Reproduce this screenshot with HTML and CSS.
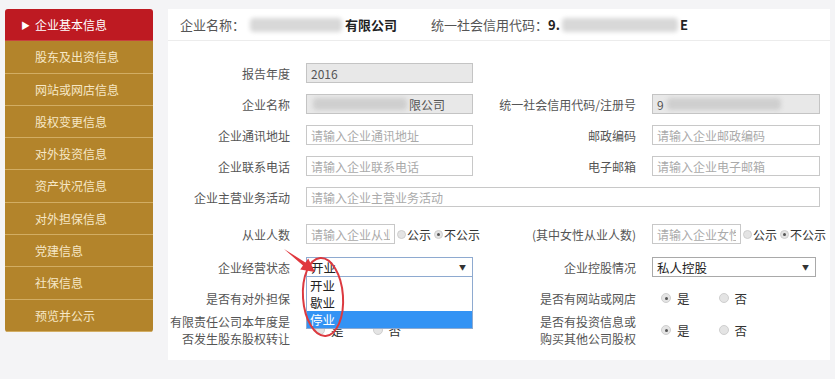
FILE: index.html
```html
<!DOCTYPE html>
<html lang="zh-CN">
<head>
    <meta charset="UTF-8">
    <meta name="viewport" content="width=device-width, initial-scale=1.0">
    <title>企业年度报告</title>
    <link rel="stylesheet" href="styles.css">
</head>
<body>
<div class="page">
    <aside class="sidebar">
        <ul class="menu">
            <li class="menu-item active"><span class="tri">&#9654;</span>企业基本信息</li>
            <li class="menu-item">股东及出资信息</li>
            <li class="menu-item">网站或网店信息</li>
            <li class="menu-item">股权变更信息</li>
            <li class="menu-item">对外投资信息</li>
            <li class="menu-item">资产状况信息</li>
            <li class="menu-item">对外担保信息</li>
            <li class="menu-item">党建信息</li>
            <li class="menu-item">社保信息</li>
            <li class="menu-item">预览并公示</li>
        </ul>
    </aside>

    <main class="main">
        <div class="head">
            <span>企业名称：</span>
            <span class="smudge smudge-name"></span>
            <b class="strong">有限公司</b>
            <span class="head-code">统一社会信用代码：</span>
            <b class="strong">9.</b>
            <span class="smudge smudge-code"></span>
            <b class="strong">E</b>
        </div>

        <form class="info-form">
            <div class="row">
                <label class="lbl">报告年度</label>
                <div class="box box-readonly">2016</div>
            </div>

            <div class="row">
                <label class="lbl">企业名称</label>
                <div class="box box-readonly"><span class="smudge smudge-in"></span>限公司</div>
                <label class="lbl">统一社会信用代码/注册号</label>
                <div class="box box-readonly">9<span class="smudge smudge-in2"></span></div>
            </div>

            <div class="row">
                <label class="lbl">企业通讯地址</label>
                <input class="box" type="text" placeholder="请输入企业通讯地址">
                <label class="lbl">邮政编码</label>
                <input class="box" type="text" placeholder="请输入企业邮政编码">
            </div>

            <div class="row">
                <label class="lbl">企业联系电话</label>
                <input class="box" type="text" placeholder="请输入企业联系电话">
                <label class="lbl">电子邮箱</label>
                <input class="box" type="text" placeholder="请输入企业电子邮箱">
            </div>

            <div class="row">
                <label class="lbl">企业主营业务活动</label>
                <input class="box span3" type="text" placeholder="请输入企业主营业务活动">
            </div>

            <div class="row row-staff">
                <label class="lbl">从业人数</label>
                <div class="inline">
                    <input class="box box-short" type="text" placeholder="请输入企业从业人数">
                    <span class="radio"></span>公示
                    <span class="radio checked gap"></span>不公示
                </div>
                <label class="lbl">(其中女性从业人数)</label>
                <div class="inline">
                    <input class="box box-short" type="text" placeholder="请输入企业女性从业人数">
                    <span class="radio"></span>公示
                    <span class="radio checked gap"></span>不公示
                </div>
            </div>

            <div class="row row-state">
                <label class="lbl">企业经营状态</label>
                <div class="select-wrap">
                    <div class="select select-open">开业<span class="caret">&#9660;</span></div>
                    <ul class="options">
                        <li>开业</li>
                        <li>歇业</li>
                        <li class="hover">停业</li>
                    </ul>
                </div>
                <label class="lbl">企业控股情况</label>
                <div class="select select-narrow">私人控股<span class="caret">&#9660;</span></div>
            </div>

            <div class="row row-radio">
                <label class="lbl">是否有对外担保</label>
                <div class="choice">
                    <span class="radio"></span><span class="opt">是</span>
                    <span class="radio checked"></span><span class="opt">否</span>
                </div>
                <label class="lbl">是否有网站或网店</label>
                <div class="choice">
                    <span class="radio checked"></span><span class="opt">是</span>
                    <span class="radio"></span><span class="opt">否</span>
                </div>
            </div>

            <div class="row row-last">
                <label class="lbl">有限责任公司本年度是<br>否发生股东股权转让</label>
                <div class="choice">
                    <span class="radio"></span><span class="opt">是</span>
                    <span class="radio"></span><span class="opt">否</span>
                </div>
                <label class="lbl">是否有投资信息或<br>购买其他公司股权</label>
                <div class="choice">
                    <span class="radio checked"></span><span class="opt">是</span>
                    <span class="radio"></span><span class="opt">否</span>
                </div>
            </div>
        </form>
    </main>

    <!-- red annotation drawn over the dropdown -->
    <svg class="mark" width="835" height="379" viewBox="0 0 835 379">
        <ellipse cx="323" cy="297" rx="20" ry="39" transform="rotate(-4 323 297)" fill="none" stroke="#dc3a40" stroke-width="2"/>
        <polygon points="284,249 305.4,262.4 308.2,258.4 315,272 300.2,269.6 303,265.6" fill="#e0383e"/>
    </svg>
</div>
</body>
</html>
```

FILE: styles.css
```css
body {
    margin: 0;
    background-color: #f4f4f6;
    font-family: "Noto Sans CJK SC", "Noto Sans", sans-serif;
    font-size: 12px;
    color: #555;
}
.page {
    display: flex;
    position: relative;
    padding-top: 9px;
    height: 370px;
    box-sizing: border-box;
}
.sidebar {
    width: 148px;
    margin-left: 5px;
}
.menu {
    list-style: none;
    margin: 0;
    padding: 0;
    border-radius: 3px;
    overflow: hidden;
}
.menu-item {
    height: 31.3px;
    line-height: 31px;
    padding-left: 30px;
    background-color: #b3842b;
    color: #f6e7c6;
    border-bottom: 1px solid #d2ad63;
    font-size: 12px;
}
.menu-item.active {
    background-color: #be1a22;
    color: #fff;
    padding-left: 16px;
    border-bottom-color: #c9423f;
}
.tri {
    font-size: 9px;
    margin-right: 5px;
    position: relative;
    top: -1px;
}
.main {
    margin-left: 15px;
    width: 662px;
    height: 351px;
    background: #fff;
}
.head {
    display: flex;
    align-items: center;
    height: 31px;
    padding-left: 12px;
    border-bottom: 1px solid #ececec;
    font-size: 13px;
    color: #555;
}
.strong {
    color: #222;
    font-weight: bold;
}
.head-code {
    margin-left: 34px;
}
.smudge {
    display: inline-block;
    height: 14px;
    background: #d8d8d8;
    filter: blur(2px);
    border-radius: 4px;
}
.smudge-name {
    width: 92px;
    margin: 0 3px 0 5px;
}
.smudge-code {
    width: 116px;
    margin: 0 2px;
}
.smudge-in {
    width: 94px;
    height: 12px;
    margin: 0 2px 0 2px;
    background: #cfcfcf;
}
.smudge-in2 {
    width: 114px;
    height: 12px;
    margin-left: 3px;
    background: #cfcfcf;
}
.info-form {
    display: flex;
    flex-direction: column;
    gap: 11px;
    padding-top: 22px;
}
.row {
    display: grid;
    grid-template-columns: 122px 167px 147px 168px;
    column-gap: 16px;
    align-items: center;
    min-height: 20px;
}
.row-staff {
    margin-top: 6px;
}
.row-state {
    margin-top: 2px;
}
.row-radio {
    margin-top: 0;
}
.row-last {
    margin-top: -6px;
}
.lbl {
    text-align: right;
    line-height: 17px;
    color: #555;
    white-space: nowrap;
}
.box {
    display: flex;
    align-items: center;
    height: 20px;
    width: 100%;
    box-sizing: border-box;
    border: 1px solid #c8c8c8;
    padding: 0 4px;
    margin: 0;
    font-family: inherit;
    font-size: 12px;
    color: #555;
    background: #fff;
    outline: none;
}
.box::placeholder {
    color: #aaa;
}
.box-readonly {
    background: #e8e8e8;
    border-color: #c4c4c4;
    overflow: hidden;
}
.span3 {
    grid-column: 2 / 5;
}
.inline {
    display: flex;
    align-items: center;
    white-space: nowrap;
    color: #333;
    font-size: 12px;
}
.box-short {
    width: 89px;
    flex: none;
    margin-right: 2px;
}
.radio {
    display: inline-block;
    width: 9px;
    height: 9px;
    border-radius: 50%;
    background: #e4e4e4;
    border: 1px solid #cfcfcf;
    box-sizing: border-box;
    position: relative;
    margin-right: 1px;
    flex: none;
}
.radio.checked::after {
    content: "";
    position: absolute;
    left: 2px;
    top: 2px;
    width: 3px;
    height: 3px;
    border-radius: 50%;
    background: #555;
}
.radio.gap {
    margin-left: 3px;
}
.select-wrap {
    position: relative;
}
.select {
    display: flex;
    align-items: center;
    justify-content: space-between;
    height: 20px;
    box-sizing: border-box;
    border: 1px solid #a9a9a9;
    padding: 0 6px 0 4px;
    color: #222;
    font-size: 12.5px;
    background: #fff;
}
.select-open {
    border-color: #8eaad0;
}
.select-narrow {
    width: 164px;
}
.caret {
    font-size: 7px;
    color: #333;
}
.options {
    position: absolute;
    top: 19px;
    left: 0;
    right: 0;
    margin: 0;
    padding: 0;
    list-style: none;
    background: #fff;
    border: 1px solid #8eaad0;
    z-index: 2;
}
.options li {
    height: 17px;
    line-height: 17px;
    padding-left: 3px;
    color: #222;
    font-size: 12.5px;
}
.options li.hover {
    background: #3393f4;
    color: #fff;
}
.choice {
    display: flex;
    align-items: center;
    padding-left: 9px;
    color: #333;
    font-size: 12.5px;
}
.choice .radio {
    width: 10px;
    height: 10px;
}
.choice .radio.checked::after {
    left: 2.5px;
    top: 2.5px;
}
.opt {
    margin-left: 5px;
    margin-right: 29px;
}
.mark {
    position: absolute;
    left: 0;
    top: 0;
    pointer-events: none;
    z-index: 3;
}
```
